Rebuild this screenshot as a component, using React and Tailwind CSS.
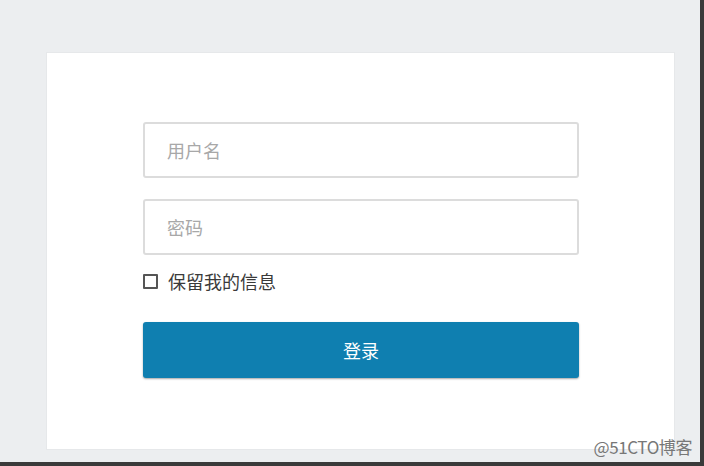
import React from "react";

const font = { fontFamily: '"Noto Sans CJK SC", "Liberation Sans", sans-serif' };

const App = () => {
  return (
    <div
      className="relative w-[704px] h-[466px] bg-[#eceef0] border-r-4 border-b-4 border-[#3a3a3a] overflow-hidden"
      style={font}
    >
      {/* Card */}
      <div className="ml-[46px] mt-[52px] w-[629px] h-[398px] bg-white border border-[#e6e8ea]">
        <form className="w-[436px] ml-[96px] pt-[69px] flex flex-col">
          <input
            type="text"
            placeholder="用户名"
            className="h-[56px] w-full border-2 border-[#dcdcdc] rounded-[3px] px-[22px] text-[18px] text-[#333] placeholder:text-[#a8a8a8] outline-none"
          />
          <input
            type="password"
            placeholder="密码"
            className="mt-[21px] h-[56px] w-full border-2 border-[#dcdcdc] rounded-[3px] px-[22px] text-[18px] text-[#333] placeholder:text-[#a8a8a8] outline-none"
          />
          <label className="mt-[17px] flex items-center gap-[10px] text-[18px] text-[#3a3a3a] leading-none">
            <span className="w-[15px] h-[15px] border-2 border-[#555] rounded-[1px] bg-white" />
            保留我的信息
          </label>
          <button
            type="button"
            className="mt-[32px] h-[56px] w-full bg-[#0f7fb0] rounded-[3px] text-white text-[18px] shadow-[0_1px_2px_rgba(0,0,0,0.35)]"
          >
            登录
          </button>
        </form>
      </div>

      {/* Watermark */}
      <div className="absolute right-[8px] bottom-[7px] text-[17px] text-[#777] leading-none tracking-tight">
        @51CTO博客
      </div>
    </div>
  );
};

export default App;
